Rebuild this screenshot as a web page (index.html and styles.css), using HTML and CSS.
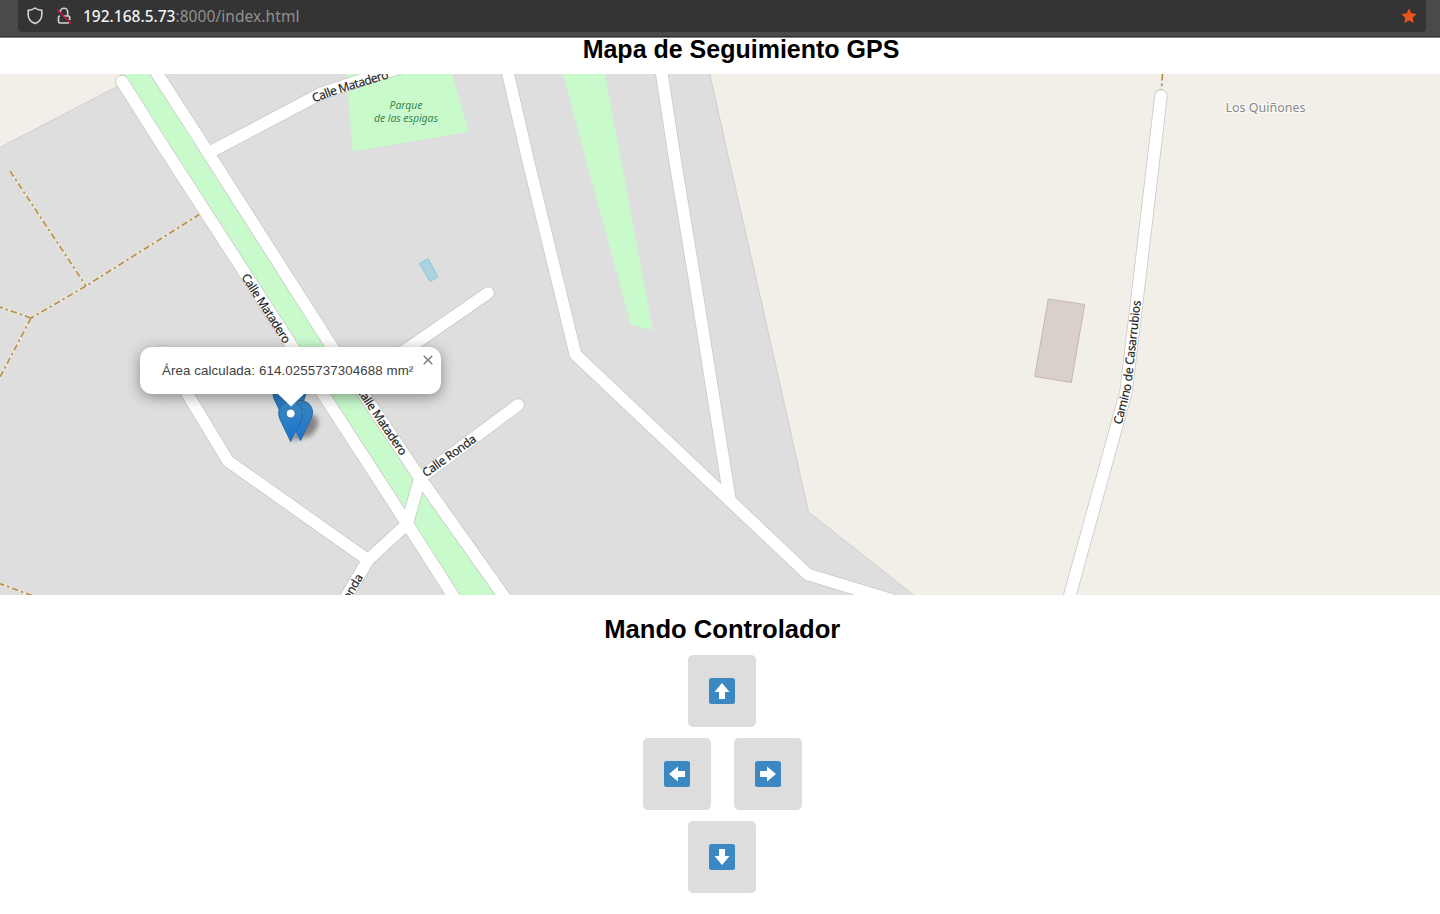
FILE: index.html
```html
<!DOCTYPE html>
<html lang="es">
<head>
<meta charset="utf-8">
<title>Mapa de Seguimiento GPS</title>
<link rel="stylesheet" href="styles.css">
</head>
<body>
<header class="toolbar">
  <div class="urlbar">
    <svg class="shield" width="18" height="20" viewBox="0 0 18 20"><path d="M9 2 C7 3.600 4.600 4.200 2.200 4.400 V9 C2.400 13 5 16 9 17.600 C13 16 15.600 13 15.800 9 V4.400 C13.400 4.200 11 3.600 9 2Z"/></svg>
    <svg class="lock" width="18" height="20" viewBox="0 0 18 20"><path d="M5.300 6 a3.700 3.700 0 0 1 7.400 0 V10 M8 10 H13.200 a1.500 1.500 0 0 1 1.500 1.500 V14 M5 10 a1.500 1.500 0 0 0 -1.500 1.500 V15.500 a1.500 1.500 0 0 0 1.500 1.500 H14"/><path class="slash" d="M2 3.500 L16.200 17.500"/></svg>
    <span class="url"><span class="host">192.168.5.73</span><span class="path">:8000/index.html</span></span>
    <svg class="star" width="18" height="18" viewBox="0 0 18 18"><path d="M9 1.500 L11.300 6.300 L16.600 7 L12.700 10.700 L13.700 16 L9 13.500 L4.300 16 L5.300 10.700 L1.400 7 L6.700 6.300Z"/></svg>
  </div>
</header>
<main>
  <h1 class="title">Mapa de Seguimiento GPS</h1>
  <section class="map">
    <svg class="tiles" width="1440" height="521" viewBox="0 74 1440 521">
      <defs>
        <linearGradient id="pinFill" x1="0" y1="0" x2="0" y2="1"><stop offset="0" stop-color="#3a87c0"/><stop offset="1" stop-color="#1a74cf"/></linearGradient>
        <filter id="soft" x="-50%" y="-50%" width="200%" height="200%"><feGaussianBlur stdDeviation="2.8"/></filter>
        <path id="pin" d="M12.500 .5 C5.800 .5 .5 5.900 .5 12.500 c0 2 .8 4.800 2 7.300 L12.500 40.500 L22.500 19.800 c1.200-2.500 2-5.300 2-7.300 C24.500 5.900 19.200 .5 12.500 .5z"/>
        <path id="pinShadow" d="M0 0 L9 -18 Q17 -30 26 -25 Q32 -15 20 -5 Z"/>
        <g id="roads">
          <path d="M122 81.500 L159 140 L292.600 347 L407 523.500 L457 602"/>
          <path d="M149 61 L200 140 L332 347 L420 478 L508 602"/>
          <path d="M420 478 L407 524 L368 560 L342 604"/>
          <path d="M162 352 L228 461 L368 560"/>
          <path d="M420 478 L518 405"/>
          <path d="M355 385 L488 293"/>
          <path d="M211 151.500 L322 93 L383 73 L420 62"/>
          <path d="M503 52 L528 160 L575.500 354.500 L808 574.500 L915 607"/>
          <path d="M658.500 52 L675 160 L698 300 L730 501"/>
          <path d="M1161 96 L1137 300 L1126 392 L1068 602"/>
        </g>
        <path id="lineTop" d="M314 102.500 L332 95.500 L396 76"/>
        <path id="lineLeft" d="M241 277 L300.500 369.500"/>
        <path id="lineRight" d="M356 390 L411 471.500"/>
        <path id="lineRonda" d="M426 477.500 L490 431.500"/>
        <path id="lineBottom" d="M330.500 633 L368 569"/>
        <path id="lineCamino" d="M1121.500 425 L1131 388 L1142 290"/>
      </defs>
      <rect class="land" y="74" width="1440" height="521"/>
      <path class="town" d="M-2 148.500 L122 84 L122 70 L709 70 L729 160 L761 300 L808.500 512 L920 600 L-2 600Z"/>
      <path class="green" d="M124 74 L157 74 L200 140 L332 347 L420 478 L506 600 L456 600 L407 523 L292 347 L159 140 L120 80Z"/>
      <path class="green" d="M348 74 L348 93 L352.700 151.700 L469 131.700 L452 74Z"/>
      <path class="green" d="M563 74 L605 74 L621 160 L652.700 330 L631 325 L586 160Z"/>
      <path class="pool" d="M419.500 263.500 L428 258.700 L438 277 L430 281.500Z"/>
      <path class="building" d="M1048.300 299 L1084.700 304.500 L1071.300 382.500 L1034.700 376.500Z"/>
      <g class="trail-base"><path d="M10 171 L86 286 L200 214 M86 286 L31 318 L-2 306.500 M31 318 L-2 381 M-2 583 L36 597 M1162.500 70 L1161 96"/></g>
      <g class="trail"><path d="M10 171 L86 286"/><path d="M200 214 L86 286 L31 318"/><path d="M31 318 L-2 306.500"/><path d="M31 318 L-2 381"/><path d="M-2 583 L36 597"/><path d="M1162.500 74 L1161 96"/></g>
      <use href="#roads" class="casing"/>
      <use href="#roads" class="surface"/>
      <g class="street">
        <text><textPath href="#lineTop" textLength="79">Calle Matadero</textPath></text>
        <text><textPath href="#lineLeft" textLength="80">Calle Matadero</textPath></text>
        <text><textPath href="#lineRight" textLength="80">Calle Matadero</textPath></text>
        <text><textPath href="#lineRonda" textLength="63">Calle Ronda</textPath></text>
        <text><textPath href="#lineBottom" textLength="65">Calle Ronda</textPath></text>
        <text><textPath href="#lineCamino" textLength="126">Camino de Casarrubios</textPath></text>
      </g>
      <text class="place" x="1225.500" y="111.500" textLength="80">Los Quiñones</text>
      <g class="park"><text x="389.500" y="109" textLength="33">Parque</text><text x="374" y="121.500" textLength="64">de las espigas</text></g>
      <use href="#pinShadow" class="pin-shadow" x="290" y="441"/>
      <g class="pins">
        <use href="#pin" x="281" y="381"/>
        <use href="#pin" x="272.500" y="381"/>
        <use href="#pin" x="288" y="400"/><circle class="faded" cx="300.500" cy="412.500" r="3.800"/>
        <use href="#pin" x="278.200" y="401"/><circle cx="290.700" cy="413.500" r="4.500"/>
      </g>
    </svg>
    <div class="popup">
      <span class="popup-text">Área calculada: 614.0255737304688 mm²</span>
      <svg class="close" width="10" height="10" viewBox="0 0 10 10"><path d="M.7 .7 L9.300 9.300 M9.300 .7 L.7 9.300"/></svg>
      <svg class="tip" width="28" height="14" viewBox="0 0 28 14"><path d="M0 0 H28 L14 13.500Z"/></svg>
    </div>
  </section>
  <section class="control">
    <h2 class="title">Mando Controlador</h2>
    <div class="row"><button class="key"><svg class="arrow" viewBox="0 0 26 26"><rect width="26" height="26" rx="2.500"/><path d="M13 5 L20.500 14 H16 V21 H10 V14 H5.500Z"/></svg></button></div>
    <div class="row"><button class="key"><svg class="arrow left" viewBox="0 0 26 26"><rect width="26" height="26" rx="2.500"/><path d="M13 5 L20.500 14 H16 V21 H10 V14 H5.500Z"/></svg></button><button class="key"><svg class="arrow right" viewBox="0 0 26 26"><rect width="26" height="26" rx="2.500"/><path d="M13 5 L20.500 14 H16 V21 H10 V14 H5.500Z"/></svg></button></div>
    <div class="row"><button class="key"><svg class="arrow down" viewBox="0 0 26 26"><rect width="26" height="26" rx="2.500"/><path d="M13 5 L20.500 14 H16 V21 H10 V14 H5.500Z"/></svg></button></div>
  </section>
</main>
</body>
</html>
```

FILE: styles.css
```css
* { box-sizing: border-box; }
body { margin: 0; height: 914px; overflow: hidden; background: #fff; font-family: "Liberation Sans", Arial, sans-serif; }
svg { display: block; flex: none; }

.toolbar { height: 38px; padding: 0 14px 0 18px; background: #4a4a4a; border-bottom: 1px solid #858585; box-shadow: inset 0 -1px #303030; }
.urlbar { height: 32px; display: flex; align-items: center; padding: 0 8px; background: #343434; border-radius: 0 0 4px 4px; }
.shield, .lock { fill: none; stroke: #d4d4d4; stroke-width: 1.6; }
.lock { margin-left: 11px; }
.lock .slash { stroke: #d3133f; stroke-width: 1.5; }
.url { margin-left: 10px; flex: 1; font: 15.5px "Noto Sans", sans-serif; white-space: nowrap; }
.host { color: #f2f2f2; font-weight: 500; }
.path { color: #919191; letter-spacing: .07px; }
.star { fill: #e95420; }

.title { margin: 0; font-size: 25px; line-height: 28px; font-weight: bold; color: #000; text-align: center; white-space: nowrap; }
h1.title { height: 36px; padding: 0 0 0 42px; line-height: 22px; }

.map { position: relative; height: 521px; overflow: hidden; }
.land { fill: #f2efe9; }
.town { fill: #dedede; stroke: #cfcfcd; stroke-width: 1; }
.green { fill: #c8facc; }
.pool { fill: #aad3df; stroke: #8ac8e0; }
.building { fill: #d9d0c9; stroke: #c6b6ab; }
.trail-base { fill: none; stroke: #eeebe4; stroke-width: 3; opacity: .7; }
.trail { fill: none; stroke: #b8924a; stroke-width: 1.7; stroke-dasharray: 6.5 3 2.5 3; }
.casing, .surface { fill: none; stroke-linecap: round; stroke-linejoin: round; }
.casing { stroke: #c9c9c7; stroke-width: 13.3; }
.surface { stroke: #fff; stroke-width: 11.7; }
.street { font: 12px "Noto Sans", sans-serif; fill: #222; stroke: #222; stroke-width: .15; }
.place { font: 12.5px "Noto Sans", sans-serif; fill: #888; stroke: #faf8f5; stroke-width: 2.5; paint-order: stroke; }
.park { font: italic 10.5px "Noto Sans", sans-serif; fill: #2a8c40; stroke: #e0fbe2; stroke-width: .8; paint-order: stroke; }
.pins use { fill: url(#pinFill); stroke: #2b6a9e; stroke-width: 1; }
.pins circle { fill: #fff; stroke: #2e73ab; }
.pins .faded { fill: #6fa5cc; }
.pin-shadow { fill: #000; opacity: .4; filter: url(#soft); }

.popup { position: absolute; left: 140px; top: 273px; width: 301px; height: 47px; padding-left: 22px; display: flex; align-items: center; background: #fff; border-radius: 12px; box-shadow: 0 3px 14px rgba(0, 0, 0, .4); }
.popup-text { font-size: 13.3px; letter-spacing: .1px; color: #404040; white-space: nowrap; }
.close { position: absolute; right: 8px; top: 8px; fill: none; stroke: #808080; stroke-width: 1.6; }
.tip { position: absolute; left: 137px; top: 46px; fill: #fff; }

.control { padding: 20px 0 0 4.5px; display: flex; flex-direction: column; gap: 11px; }
.control .title { height: 29px; font-size: 25.6px; }
.row { display: flex; justify-content: center; gap: 23.5px; }
.row .key { width: 68px; height: 72px; padding: 0; display: flex; align-items: center; justify-content: center; background: #ddd; border: 0; border-radius: 5px; }
.arrow { width: 26px; height: 26px; fill: #fff; }
.arrow rect { fill: #3b88c3; }
.left { transform: rotate(-90deg); }
.right { transform: rotate(90deg); }
.down { transform: rotate(180deg); }
```
